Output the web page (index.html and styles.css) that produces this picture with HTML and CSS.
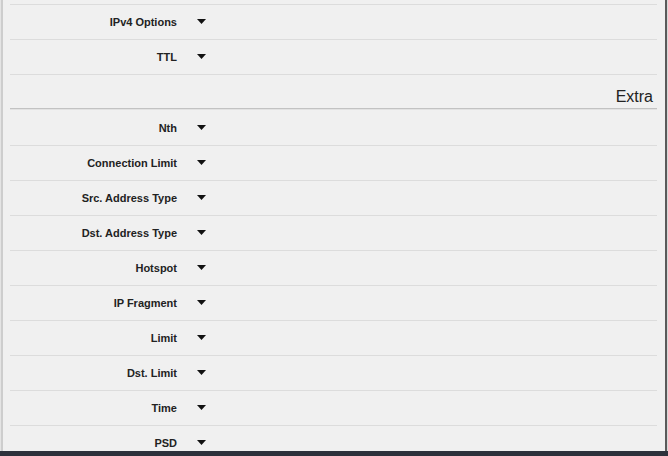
FILE: index.html
```html
<!DOCTYPE html>
<html>
<head>
<meta charset="utf-8">
<link rel="stylesheet" href="styles.css">
</head>
<body>
<div class="frame">
  <div class="inner">
    <div class="spacer"></div>
    <div class="row"><div class="label">IPv4 Options</div><div class="arrow"><svg width="9" height="5" viewBox="0 0 9 5"><polygon points="0,0 9,0 4.5,5"/></svg></div></div>
    <div class="row"><div class="label">TTL</div><div class="arrow"><svg width="9" height="5" viewBox="0 0 9 5"><polygon points="0,0 9,0 4.5,5"/></svg></div></div>
    <div class="section">Extra</div>
    <div class="row"><div class="label">Nth</div><div class="arrow"><svg width="9" height="5" viewBox="0 0 9 5"><polygon points="0,0 9,0 4.5,5"/></svg></div></div>
    <div class="row"><div class="label">Connection Limit</div><div class="arrow"><svg width="9" height="5" viewBox="0 0 9 5"><polygon points="0,0 9,0 4.5,5"/></svg></div></div>
    <div class="row"><div class="label">Src. Address Type</div><div class="arrow"><svg width="9" height="5" viewBox="0 0 9 5"><polygon points="0,0 9,0 4.5,5"/></svg></div></div>
    <div class="row"><div class="label">Dst. Address Type</div><div class="arrow"><svg width="9" height="5" viewBox="0 0 9 5"><polygon points="0,0 9,0 4.5,5"/></svg></div></div>
    <div class="row"><div class="label">Hotspot</div><div class="arrow"><svg width="9" height="5" viewBox="0 0 9 5"><polygon points="0,0 9,0 4.5,5"/></svg></div></div>
    <div class="row"><div class="label">IP Fragment</div><div class="arrow"><svg width="9" height="5" viewBox="0 0 9 5"><polygon points="0,0 9,0 4.5,5"/></svg></div></div>
    <div class="row"><div class="label">Limit</div><div class="arrow"><svg width="9" height="5" viewBox="0 0 9 5"><polygon points="0,0 9,0 4.5,5"/></svg></div></div>
    <div class="row"><div class="label">Dst. Limit</div><div class="arrow"><svg width="9" height="5" viewBox="0 0 9 5"><polygon points="0,0 9,0 4.5,5"/></svg></div></div>
    <div class="row"><div class="label">Time</div><div class="arrow"><svg width="9" height="5" viewBox="0 0 9 5"><polygon points="0,0 9,0 4.5,5"/></svg></div></div>
    <div class="row"><div class="label">PSD</div><div class="arrow"><svg width="9" height="5" viewBox="0 0 9 5"><polygon points="0,0 9,0 4.5,5"/></svg></div></div>
  </div>
</div>
<div class="footer"></div>
</body>
</html>
```
FILE: styles.css
```css
html, body {
  margin: 0;
  padding: 0;
  background: #f0f0f0;
  font-family: "Liberation Sans", Arial, sans-serif;
  overflow: hidden;
}
.frame {
  height: 451px;
  overflow: hidden;
  border-left: 1px solid #e4e4e4;
  border-right: 1px solid #d8d8d8;
  box-sizing: border-box;
}
.inner {
  height: 100%;
  border-left: 2px solid #cdcdcd;
  border-right: 2px solid #5a5a5a;
  padding: 0 8px 0 7px;
  overflow: hidden;
}
.spacer {
  height: 4px;
  border-bottom: 1px solid #dcdcdc;
}
.row {
  height: 34px;
  border-bottom: 1px solid #dcdcdc;
  display: flex;
  align-items: center;
}
.label {
  width: 167px;
  text-align: right;
  font-size: 11px;
  font-weight: bold;
  color: #222;
}
.arrow {
  margin-left: 20px;
  display: flex;
  align-items: center;
  margin-top: -1px;
}
.arrow svg {
  fill: #111;
  display: block;
}
.section {
  height: 34px;
  box-sizing: border-box;
  display: flex;
  justify-content: flex-end;
  align-items: flex-end;
  padding: 0 4px 2px 0;
  font-size: 16px;
  color: #222;
  border-bottom: 1px solid #c2c2c2;
  box-shadow: 0 1px 0 #e2e2e2;
  margin-bottom: 2px;
}
.footer {
  height: 5px;
  background: #2d313b;
}
```
